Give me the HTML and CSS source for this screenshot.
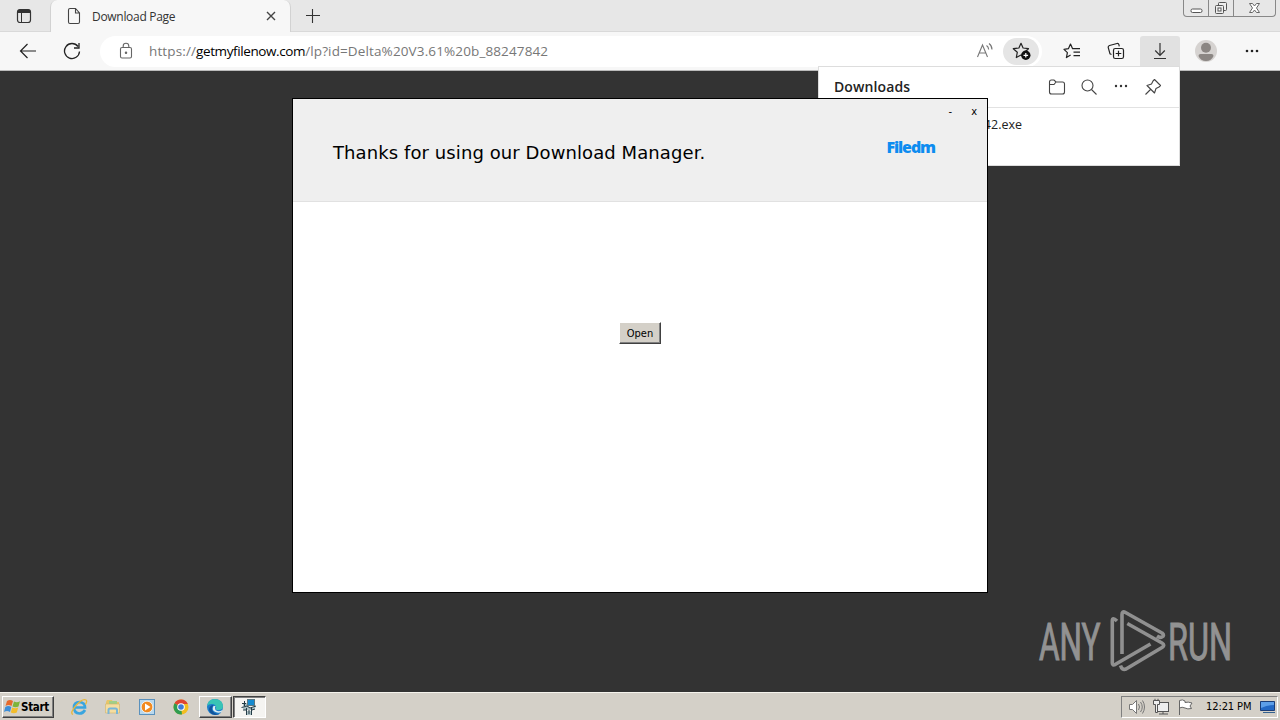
FILE: index.html
```
<!DOCTYPE html>
<html lang="en">
<head>
  <meta charset="UTF-8">
  <title>Download Page</title>
  <link rel="stylesheet" href="styles.css">
</head>
<body>
  <div class="desktop">
    <header class="tab-strip">
      <svg class="tab-actions" width="16" height="16" viewBox="0 0 16 16"><rect x="1.5" y="1.5" width="13" height="13" rx="2.5" fill="none" stroke="#333" stroke-width="1.2"/><path d="M1.5 5V3.5q0-2 2-2h9q2 0 2 2V5z" fill="#333"/><path d="M5.5 5v9" stroke="#333"/></svg>
      <div class="tab">
        <svg width="14" height="18" viewBox="0 0 14 18" fill="none" stroke="#444" stroke-width="1.1"><path d="M3 1.5h5.5l4 4.500V15q0 1.500-1.500 1.500H3Q1.500 16.500 1.500 15V3q0-1.500 1.500-1.500zM8.500 1.500V6h4"/></svg>
        <span class="tab-title">Download Page</span>
        <svg class="tab-close" width="10" height="10" viewBox="0 0 10 10" stroke="#444" stroke-width="1.4"><path d="M1 1l8 8M9 1L1 9"/></svg>
      </div>
      <svg class="new-tab" width="14" height="14" viewBox="0 0 14 14" stroke="#333" stroke-width="1.1"><path d="M6.500 0v14M0 6.500h14"/></svg>
      <div class="window-buttons">
        <span><svg width="13" height="16" viewBox="0 0 13 16"><rect x="1" y="9" width="11" height="3.500" rx="1.500" fill="#fff" stroke="#555"/></svg></span>
        <span><svg width="14" height="16" viewBox="0 0 14 16" fill="#eee" stroke="#555"><rect x="4.500" y="2.500" width="8" height="8" rx="1"/><rect x="1.500" y="5.500" width="8" height="8" rx="1"/><rect x="4" y="8" width="3" height="3" fill="#fff"/></svg></span>
        <span class="close"><svg width="13" height="16" viewBox="0 0 13 16"><path d="M1.500 3.500h3l2 2.500 2-2.500h3L8.500 8l3 4.500h-3l-2-2.500-2 2.500h-3L4.500 8z" fill="#fff" stroke="#666"/></svg></span>
      </div>
    </header>

    <nav class="toolbar">
      <svg class="back" width="18" height="16" viewBox="0 0 18 16" fill="none" stroke="#222" stroke-width="1.2"><path d="M17 8H1.500M8.500 1L1.500 8l7 7"/></svg>
      <svg class="reload" width="18" height="18" viewBox="0 0 18 18" fill="none" stroke="#222" stroke-width="1.3"><path d="M16.500 9.500A7.500 7.500 0 1 1 15 4.500M16 1v5h-5"/></svg>
      <div class="address">
        <svg class="lock" width="14" height="18" viewBox="0 0 14 18" fill="none" stroke="#666" stroke-width="1.100"><rect x="1.500" y="5.500" width="11" height="10.500" rx="1.500"/><path d="M4.200 5.500V4q0-2.800 2.800-2.800T9.800 4v1.500"/><circle cx="7" cy="10.800" r=".7" fill="#666"/></svg>
        <span class="url">https://<b>getmyfilenow.com</b>/lp?id=Delta%20V3.61%20b_88247842</span>
        <svg class="read-aloud" width="18" height="18" viewBox="0 0 18 18" fill="none" stroke="#777" stroke-width="1.100"><path d="M1.500 15L6.500 3l5 12M3.200 11h6.600M10.500 3.500q2 1.300 2.200 4M13 1.500q3 2.200 3 6"/></svg>
        <span class="favorite"><svg width="20" height="20" viewBox="0 0 20 20"><path d="M9 2.300l2.100 4.700 5.400.7-4 3.600 1 5.200L9 14l-4.700 2.500 1-5.200-4-3.600 5.600-.7z" fill="none" stroke="#222" stroke-width="1.200" stroke-linejoin="round"/><circle cx="13.800" cy="14.300" r="4.700" fill="#111"/><path d="M13.800 12v4.600M11.500 14.300h4.600" stroke="#fff" stroke-width="1.200"/></svg></span>
      </div>
      <svg class="tool" width="18" height="18" viewBox="0 0 18 18" fill="none" stroke="#222" stroke-width="1.200" stroke-linejoin="round"><path d="M12 6.700H9.600L7.500 2 5.400 6.700l-4.400.7 3.400 3.200-1 5L7.600 13M11 6.700h6M10.500 10.200H17M10.500 13.700H17"/></svg>
      <svg class="tool collections" width="18" height="18" viewBox="0 0 18 18" fill="none" stroke="#222" stroke-width="1.200"><path d="M4.500 12.500L3 11.800 1.200 5.500Q1 4 2.500 3.500l7.500-2q1.500-.3 1.900 1.200l.4 1.600"/><rect x="6.500" y="6.500" width="10" height="10" rx="1.800"/><path d="M11.500 8.700v5.600M8.700 11.500h5.600"/></svg>
      <span class="download-button"><svg width="16" height="18" viewBox="0 0 16 18" fill="none" stroke="#333" stroke-width="1.200"><path d="M8 1v12M3.200 8.500L8 13.300l4.800-4.800M2 16.500h12"/></svg></span>
      <svg class="avatar" width="24" height="24" viewBox="0 0 24 24"><circle cx="12" cy="12" r="11" fill="#d6d3d1"/><circle cx="12" cy="8.800" r="5" fill="#8b8683"/><path d="M4.500 17q0-2 2-2h11q2 0 2 2-2 5-7.500 5t-7.500-5z" fill="#8b8683"/></svg>
      <svg class="more" width="16" height="4" viewBox="0 0 16 4" fill="#222"><circle cx="3" cy="2" r="1.300"/><circle cx="8" cy="2" r="1.300"/><circle cx="13" cy="2" r="1.300"/></svg>
    </nav>

    <main class="page">
      <svg class="watermark" width="210" height="70" viewBox="0 0 210 70">
        <g fill="#929292" stroke="#929292" stroke-width="1.100" font-family="Roboto, sans-serif" font-size="52.500">
          <text transform="translate(3 50.500) scale(.6 1)">ANY</text>
          <text transform="translate(132 50.500) scale(.616 1)">RUN</text>
        </g>
        <path d="M81 12Q76.300 7.500 76.300 12V54Q76.300 57 79.500 55.300L114.500 35M86 45V5.500Q86 1.500 89.500 3.500L126 24Q129 26.500 126 28Q124 29 121 27M91.300 14.500L126 34Q129.500 36 126 38.500L90 60Q86 61.500 84.500 56.500" fill="none" stroke="#909090" stroke-width="3.600" stroke-linejoin="round"/>
      </svg>
    </main>

    <section class="downloads">
      <div class="downloads-head">
        <h2>Downloads</h2>
        <svg width="18" height="18" viewBox="0 0 18 18" fill="none" stroke="#444" stroke-width="1.100"><path d="M1.500 6.500V4q0-2 2-2H6l2 2h6.500q2 0 2 2v8q0 2-2 2h-11q-2 0-2-2V6.500H6L8 4"/></svg>
        <svg width="18" height="18" viewBox="0 0 18 18" fill="none" stroke="#444" stroke-width="1.100"><circle cx="7.500" cy="7.500" r="5.500"/><path d="M11.500 11.500l5 5"/></svg>
        <svg width="18" height="18" viewBox="0 0 18 18" fill="#333"><circle cx="4" cy="8" r="1.200"/><circle cx="9" cy="8" r="1.200"/><circle cx="14" cy="8" r="1.200"/></svg>
        <svg width="18" height="18" viewBox="0 0 18 18" fill="none" stroke="#444" stroke-width="1.100" stroke-linejoin="round"><path d="M10.500 1.500l6 6-1.500 1.500-3 1.500-1.500 4.500L3 7.500 7.500 6 9 3zM6.500 11.500L1.500 16.500"/></svg>
      </div>
      <p>Delta V3.61 b_88247842.exe</p>
    </section>

    <section class="dialog">
      <div class="dialog-head">
        <h1>Thanks for using our Download Manager.</h1>
        <span class="brand">Filedm</span>
        <div class="dialog-controls"><span>-</span><span>x</span></div>
      </div>
      <div class="dialog-body">
        <button class="open-btn">Open</button>
      </div>
    </section>

    <footer class="taskbar">
      <button class="start">
        <svg width="17" height="16" viewBox="0 0 17 16"><path d="M3 2q3-2 6 0L7.500 7q-3-2-6 0z" fill="#e66a2c"/><path d="M10 2.500q3 1.500 6-.3L14.500 7.500q-3 1.500-6 0z" fill="#7db43a"/><path d="M1.300 8q3-2 6 0L6 13q-3-2-6 0z" fill="#3d8ed8"/><path d="M8.200 8.500q3 1.500 6 0L12.800 13.500q-3 1.500-6 0z" fill="#f3bd2c"/></svg>
        Start
      </button>
      <span class="launch"><svg width="18" height="18" viewBox="0 0 18 18" fill="none"><path d="M15 12Q13 15.500 9.500 15.500 4 15 4 9.500T9.500 4q5.500.5 5.500 5.500H5" stroke="#39a5df" stroke-width="2.700"/><path d="M3 16.500Q-.5 15 6 7.500T16 2q1.500 1-.5 4.500" stroke="#e8b73a" stroke-width="1.300"/></svg></span>
      <span class="launch"><svg width="18" height="18" viewBox="0 0 18 18"><path d="M2 4l1-2h5l1 2h6v10H2z" fill="#e8c568"/><path d="M5 3h8v4H5z" fill="#9fcf88"/><path d="M1.500 6h14v9h-14z" fill="#f5dda0" stroke="#ceb36d" stroke-width=".6"/><path d="M4.500 16v-4q0-1.500 1.500-1.500h5.500q1.500 0 1.500 1.500v4" fill="none" stroke="#78b6d9" stroke-width="2"/></svg></span>
      <span class="launch"><svg width="18" height="18" viewBox="0 0 18 18"><rect x="1.500" y="1.500" width="15" height="15" fill="#b9d8ed" stroke="#5a91bd"/><circle cx="9" cy="9" r="5.800" fill="#f18a20" stroke="#fff" stroke-width=".7"/><path d="M7 5.500v7l5.500-3.500z" fill="#fff"/></svg></span>
      <span class="launch"><svg width="18" height="18" viewBox="0 0 18 18"><circle cx="9" cy="9" r="7.500" fill="#f2bd21"/><path d="M9 9L2.500 5.300A7.500 7.500 0 0 1 15.800 6H9z" fill="#de4433"/><path d="M2.500 5.300L9 9l1 7.400A7.500 7.500 0 0 1 2.500 5.300z" fill="#2f9c50"/><circle cx="9" cy="9" r="3.800" fill="#fff"/><circle cx="9" cy="9" r="2.800" fill="#3e7bd7"/></svg></span>
      <span class="task"><svg width="18" height="18" viewBox="0 0 18 18"><circle cx="9" cy="9" r="8" fill="#1d7ecb"/><path d="M1.200 8Q2 1 9 1q7.500.5 8 7 0 4-4.500 4-3 0-2.500-1.500Q11 7.500 7 6 3 5.500 1.200 8z" fill="#38c4b5"/><path d="M7.500 7Q4 11 8 14.500q3 2.500 7 .5-2 2-6 2Q3 16 3 11q1-4 4.500-4z" fill="#12549b"/><path d="M9.500 8q-1 1.500 0 4 3 2.500 7 0l-1 2q-4 1.500-7-.5T7.500 8z" fill="#ddeef2"/></svg></span>
      <span class="task active"><svg width="18" height="18" viewBox="0 0 18 18"><path d="M3 5h4v3H3zM2 9l6-1 3 2 5-2-2 4H4zM6 13h6v4H6z" fill="#a9bec2"/><path d="M4.500 3v5M2 5.500h4M1.500 9.500L7 8l3 2 6-2M3 12h4M6.500 10v7M11.500 10v7M9 12v4M12 12l3-1" fill="none" stroke="#243b46"/><rect x="7.500" y="1.500" width="7" height="6" fill="#168bd0" stroke="#5b7882"/></svg></span>
      <div class="tray">
        <svg width="18" height="18" viewBox="0 0 18 18" fill="none" stroke="#777"><path d="M1.500 6.500h3l4-4v13l-4-4h-3z" fill="#fff"/><path d="M10.500 6q2 3 0 6M12.500 4q3.500 5 0 10M14.500 2.500q4 6.500 0 13"/></svg>
        <svg width="18" height="18" viewBox="0 0 18 18" fill="#eee" stroke="#555"><rect x="5.500" y="4.500" width="11" height="9"/><path d="M7 16h9M11 13.500V16"/><path d="M1.500 2.500h6v4h-2v8h-2v-8h-2zM3 .8v2M6 .8v2"/></svg>
        <svg width="18" height="18" viewBox="0 0 18 18" fill="#fff" stroke="#666"><path d="M3.500 17V2.500q3-1.500 5.500.5v1.500q3-1 7 .5l-2 3 1.500 2.500q-4 1-6.500-.5-3-1.500-5.500 0"/></svg>
        <span class="clock">12:21 PM</span>
        <svg width="18" height="16" viewBox="0 0 18 16"><path d="M1.500 2.500h14v9h-14z" fill="#2368c4" stroke="#1a3d78"/><path d="M2 3h13v3Q8 6 2 9z" fill="#5c9ee8"/><path d="M4 13.500h12" stroke="#34618f"/></svg>
      </div>
    </footer>
  </div>
</body>
</html>
```

FILE: styles.css
```
* {
  box-sizing: border-box;
}
body {
  margin: 0;
  font-family: "Open Sans", sans-serif;
  overflow: hidden;
}
svg {
  display: block;
  flex: none;
}
.desktop {
  position: relative;
  width: 1280px;
  height: 720px;
  display: flex;
  flex-direction: column;
  background: #333;
}

/* browser tabs */
.tab-strip {
  height: 32px;
  display: flex;
  align-items: center;
  background: #e7e7e7;
  border-bottom: 1px solid #d9d9d9;
}
.tab-actions {
  margin-left: 16px;
}
.tab {
  width: 241px;
  height: 32px;
  margin: 0 0 -1px 18px;
  padding: 0 14px 0 16px;
  display: flex;
  align-items: center;
  background: #f7f7f7;
  border: solid #d2d2d2;
  border-width: 0 1px;
  border-radius: 7px 7px 0 0;
}
.tab-title {
  margin-left: 11px;
  font-size: 12px;
  letter-spacing: -0.3px;
  color: #333;
}
.tab-close {
  margin-left: auto;
}
.new-tab {
  margin-left: 15px;
}
.window-buttons {
  align-self: flex-start;
  display: flex;
  height: 17px;
  margin: 0 4px 0 auto;
  border: 1px solid #888;
  border-top: 0;
  border-radius: 0 0 4px 4px;
}
.window-buttons span {
  width: 25px;
  display: flex;
  justify-content: center;
  border-right: 1px solid #888;
}
.window-buttons .close {
  width: 41px;
  border-right: 0;
}

/* toolbar */
.toolbar {
  height: 39px;
  display: flex;
  align-items: center;
  background: #f7f7f7;
  border-bottom: 1px solid #bbb;
}
.back {
  margin-left: 19px;
}
.reload {
  margin-left: 26px;
}
.address {
  width: 942px;
  height: 31px;
  margin: 0 21px 0 19px;
  padding: 0 3px 0 19px;
  display: flex;
  align-items: center;
  background: #fff;
  border-radius: 16px;
}
.url {
  margin-left: 16px;
  font-size: 13.5px;
  letter-spacing: 0.13px;
  color: #777;
  white-space: nowrap;
}
.url b {
  font-weight: 400;
  letter-spacing: -0.4px;
  color: #000;
}
.read-aloud {
  margin-left: auto;
}
.favorite {
  width: 36px;
  height: 27px;
  margin-left: 9px;
  padding-left: 2px;
  display: flex;
  align-items: center;
  justify-content: center;
  background: #e5e5e5;
  border-radius: 14px;
}
.collections {
  margin-left: 26px;
}
.download-button {
  width: 40px;
  height: 31px;
  margin-left: 15px;
  display: flex;
  align-items: center;
  justify-content: center;
  background: #e1e1e1;
  border-radius: 3px 3px 0 0;
}
.avatar {
  margin-left: 14px;
}
.more {
  margin-left: 26px;
}

.page {
  position: relative;
  flex: 1;
  background: #333;
}
.watermark {
  position: absolute;
  right: 34px;
  bottom: 13px;
}

/* downloads flyout */
.downloads {
  position: absolute;
  left: 818px;
  top: 66px;
  width: 362px;
  height: 100px;
  background: #fff;
  border: 1px solid #ddd;
}
.downloads-head {
  height: 41px;
  padding: 0 17px 0 15px;
  display: flex;
  align-items: center;
  gap: 14px;
  border-bottom: 1px solid #e2e2e2;
}
.downloads h2 {
  margin: -2px auto 0 0;
  font-size: 14px;
  font-weight: 600;
  letter-spacing: 0.1px;
  color: #222;
}
.downloads p {
  margin: 7px 157px 0 0;
  text-align: right;
  font-size: 12.5px;
  line-height: 20px;
  color: #222;
}

/* installer window */
.dialog {
  position: absolute;
  left: 292px;
  top: 98px;
  width: 696px;
  height: 495px;
  background: #fff;
  border: 1px solid #000;
}
.dialog-head {
  position: relative;
  height: 103px;
  padding: 0 52px 0 40px;
  display: flex;
  align-items: center;
  justify-content: space-between;
  background: #efefef;
  border-bottom: 1px solid #e1e1e1;
}
.dialog h1 {
  margin: 5px 0 0;
  font: 18px "DejaVu Sans", sans-serif;
  letter-spacing: 0.09px;
}
.brand {
  margin-top: -6px;
  font: 800 16px "Open Sans", sans-serif;
  letter-spacing: -1.1px;
  color: #0d8cf0;
}
.dialog-controls {
  position: absolute;
  top: 6px;
  right: 10px;
  display: flex;
  gap: 19px;
  font: 11px "DejaVu Sans Condensed", sans-serif;
}
.dialog-body {
  display: flex;
  justify-content: center;
  padding-top: 120px;
}
.open-btn {
  width: 42px;
  height: 22px;
  padding: 0;
  font: 11px "DejaVu Sans Condensed", "DejaVu Sans", sans-serif;
  background: #d4d0c8;
  border: 1px solid;
  border-color: #fff #404040 #404040 #fff;
  box-shadow: inset -1px -1px #808080;
}

/* taskbar */
.taskbar {
  height: 28px;
  display: flex;
  align-items: center;
  padding: 0 2px;
  background: #d4d0c8;
  border-top: 1px solid #f5f3ed;
  font-family: "DejaVu Sans Condensed", "DejaVu Sans", sans-serif;
}
.start {
  width: 52px;
  height: 22px;
  margin-right: 16px;
  padding: 0 1px;
  display: flex;
  align-items: center;
  background: #d4d0c8;
  border: 1px solid;
  border-color: #fff #404040 #404040 #fff;
  box-shadow: inset -1px -1px #808080;
  font: bold 11.5px "DejaVu Sans Condensed", sans-serif;
  letter-spacing: -0.3px;
}
.launch {
  width: 34px;
}
.task {
  width: 33px;
  height: 22px;
  margin: 0 1px 0 -7px;
  padding-right: 2px;
  display: flex;
  align-items: center;
  justify-content: center;
  border: 1px solid;
  border-color: #fff #404040 #404040 #fff;
  box-shadow: inset -1px -1px #808080;
}
.task.active {
  margin-left: 0;
  background: #f5f4f1;
  border-color: #404040 #fff #fff #404040;
  box-shadow: inset 1px 1px #808080;
}
.tray {
  width: 157px;
  height: 22px;
  margin-left: auto;
  padding-left: 6px;
  display: flex;
  align-items: center;
  gap: 6px;
  border: 1px solid;
  border-color: #808080 #fff #fff #808080;
  font-size: 11px;
}
.clock {
  width: 47px;
  margin: 0 1px 0 6px;
  white-space: nowrap;
  letter-spacing: -0.1px;
}
```
